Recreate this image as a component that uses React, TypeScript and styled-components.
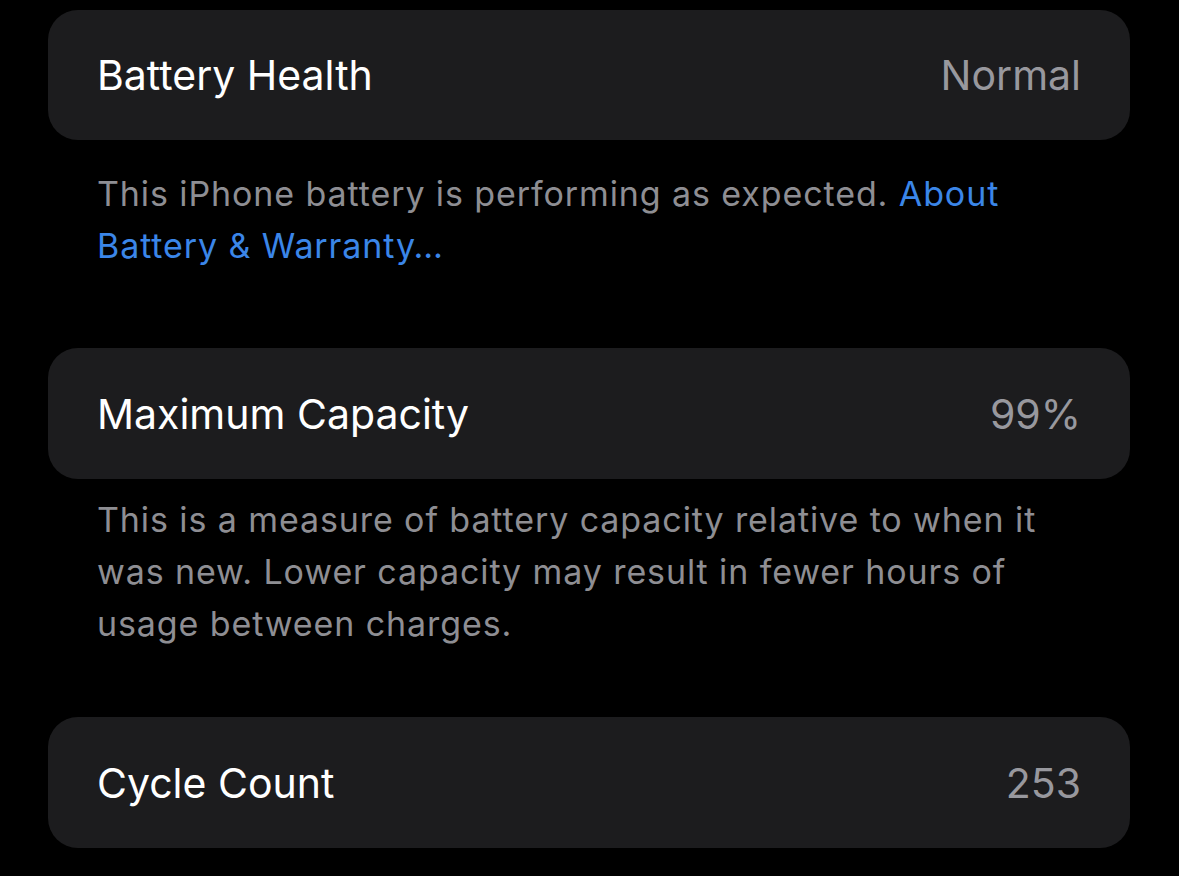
import styled, { createGlobalStyle } from 'styled-components';

const GlobalStyle = createGlobalStyle`
  html, body {
    margin: 0;
    padding: 0;
    background: #000;
  }
  body {
    font-family: Inter, "Noto Sans", sans-serif;
    -webkit-font-smoothing: antialiased;
  }
`;

const Page = styled.div`
  width: 1179px;
  height: 876px;
  overflow: hidden;
  box-sizing: border-box;
  padding: 10px 49px 0 48px;
  background: #000;
`;

const Card = styled.div<{ $height: number }>`
  height: ${(p) => p.$height}px;
  box-sizing: border-box;
  padding: 0 49px;
  display: flex;
  align-items: center;
  justify-content: space-between;
  background: #1c1c1e;
  border-radius: 30px;
`;

const Label = styled.span`
  font-size: 41px;
  color: #fff;
`;

const Value = styled.span`
  font-size: 41px;
  color: #98989e;
`;

const Footer = styled.p<{ $top: number; $bottom: number }>`
  margin: ${(p) => p.$top}px 0 ${(p) => p.$bottom}px;
  padding: 0 49px;
  font-size: 34px;
  line-height: 52px;
  letter-spacing: 0.9px;
  color: #8e8e93;
`;

const Link = styled.span`
  color: #3b86e8;
`;

interface Row {
  label: string;
  value: string;
  height: number;
}

function SettingRow({ label, value, height }: Row) {
  return (
    <Card $height={height}>
      <Label>{label}</Label>
      <Value>{value}</Value>
    </Card>
  );
}

export default function App() {
  return (
    <Page>
      <GlobalStyle />
      <SettingRow label="Battery Health" value="Normal" height={130} />
      <Footer $top={28} $bottom={76}>
        This iPhone battery is performing as expected. <Link>About Battery &amp; Warranty…</Link>
      </Footer>
      <SettingRow label="Maximum Capacity" value="99%" height={131} />
      <Footer $top={15} $bottom={67}>
        This is a measure of battery capacity relative to when it was new. Lower capacity may result in fewer hours of usage between charges.
      </Footer>
      <SettingRow label="Cycle Count" value="253" height={131} />
    </Page>
  );
}
